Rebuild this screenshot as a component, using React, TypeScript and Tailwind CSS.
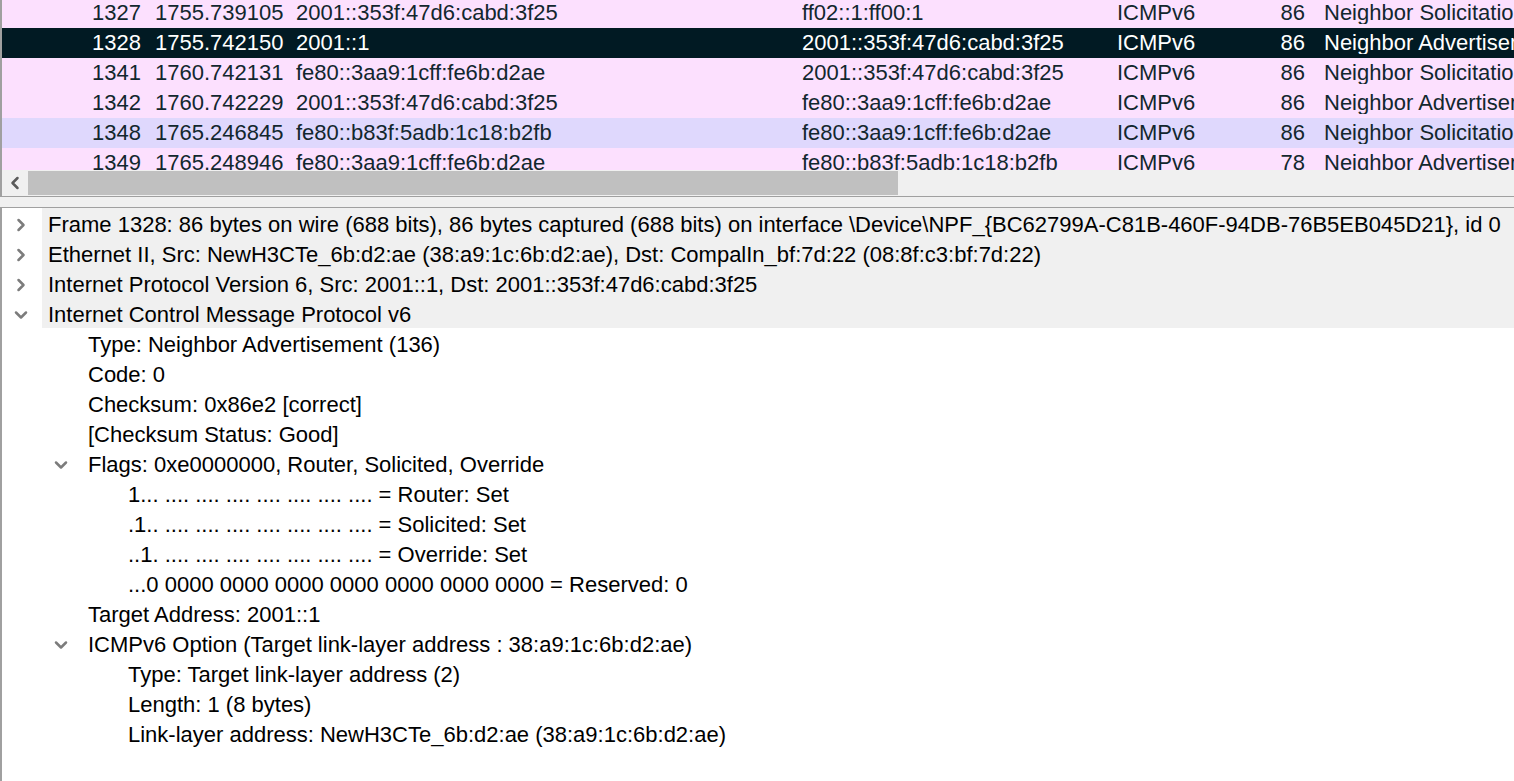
import { ChevronDown, ChevronLeft, ChevronRight } from "lucide-react";

type Packet = {
  no: number;
  time: string;
  src: string;
  dst: string;
  proto: string;
  len: number;
  info: string;
  tone: "pink" | "lilac";
};

const packets: Packet[] = [
  { no: 1327, time: "1755.739105", src: "2001::353f:47d6:cabd:3f25", dst: "ff02::1:ff00:1", proto: "ICMPv6", len: 86, info: "Neighbor Solicitation for 2001::1 from 24:41:8c:bf:7d:22", tone: "pink" },
  { no: 1328, time: "1755.742150", src: "2001::1", dst: "2001::353f:47d6:cabd:3f25", proto: "ICMPv6", len: 86, info: "Neighbor Advertisement 2001::1 (rtr, sol, ovr) is at 38:a9:1c:6b:d2:ae", tone: "pink" },
  { no: 1341, time: "1760.742131", src: "fe80::3aa9:1cff:fe6b:d2ae", dst: "2001::353f:47d6:cabd:3f25", proto: "ICMPv6", len: 86, info: "Neighbor Solicitation for 2001::353f:47d6:cabd:3f25 from 38:a9:1c:6b:d2:ae", tone: "pink" },
  { no: 1342, time: "1760.742229", src: "2001::353f:47d6:cabd:3f25", dst: "fe80::3aa9:1cff:fe6b:d2ae", proto: "ICMPv6", len: 86, info: "Neighbor Advertisement 2001::353f:47d6:cabd:3f25 (sol, ovr) is at 08:8f:c3:bf:7d:22", tone: "pink" },
  { no: 1348, time: "1765.246845", src: "fe80::b83f:5adb:1c18:b2fb", dst: "fe80::3aa9:1cff:fe6b:d2ae", proto: "ICMPv6", len: 86, info: "Neighbor Solicitation for fe80::3aa9:1cff:fe6b:d2ae from 08:8f:c3:bf:7d:22", tone: "lilac" },
  { no: 1349, time: "1765.248946", src: "fe80::3aa9:1cff:fe6b:d2ae", dst: "fe80::b83f:5adb:1c18:b2fb", proto: "ICMPv6", len: 78, info: "Neighbor Advertisement fe80::3aa9:1cff:fe6b:d2ae (rtr, sol)", tone: "pink" },
];

const SELECTED = 1328;

type Node = {
  text: string;
  level: number;
  state?: "open" | "closed";
  top?: boolean;
};

const details: Node[] = [
  { text: "Frame 1328: 86 bytes on wire (688 bits), 86 bytes captured (688 bits) on interface \\Device\\NPF_{BC62799A-C81B-460F-94DB-76B5EB045D21}, id 0", level: 0, state: "closed", top: true },
  { text: "Ethernet II, Src: NewH3CTe_6b:d2:ae (38:a9:1c:6b:d2:ae), Dst: CompalIn_bf:7d:22 (08:8f:c3:bf:7d:22)", level: 0, state: "closed", top: true },
  { text: "Internet Protocol Version 6, Src: 2001::1, Dst: 2001::353f:47d6:cabd:3f25", level: 0, state: "closed", top: true },
  { text: "Internet Control Message Protocol v6", level: 0, state: "open", top: true },
  { text: "Type: Neighbor Advertisement (136)", level: 1 },
  { text: "Code: 0", level: 1 },
  { text: "Checksum: 0x86e2 [correct]", level: 1 },
  { text: "[Checksum Status: Good]", level: 1 },
  { text: "Flags: 0xe0000000, Router, Solicited, Override", level: 1, state: "open" },
  { text: "1... .... .... .... .... .... .... .... = Router: Set", level: 2 },
  { text: ".1.. .... .... .... .... .... .... .... = Solicited: Set", level: 2 },
  { text: "..1. .... .... .... .... .... .... .... = Override: Set", level: 2 },
  { text: "...0 0000 0000 0000 0000 0000 0000 0000 = Reserved: 0", level: 2 },
  { text: "Target Address: 2001::1", level: 1 },
  { text: "ICMPv6 Option (Target link-layer address : 38:a9:1c:6b:d2:ae)", level: 1, state: "open" },
  { text: "Type: Target link-layer address (2)", level: 2 },
  { text: "Length: 1 (8 bytes)", level: 2 },
  { text: "Link-layer address: NewH3CTe_6b:d2:ae (38:a9:1c:6b:d2:ae)", level: 2 },
];

function PacketRow({ p }: { p: Packet }) {
  const sel = p.no === SELECTED;
  const bg = sel
    ? "bg-[#011a23] text-white"
    : p.tone === "lilac"
      ? "bg-[#dfd8fd] text-[#12272e]"
      : "bg-[#fce0fe] text-[#12272e]";
  return (
    <div className={`flex h-[30px] items-center whitespace-nowrap ${bg}`}>
      <div className="w-[139px] shrink-0 text-right">{p.no}</div>
      <div className="w-[155px] shrink-0 pl-[14px]">{p.time}</div>
      <div className="w-[506px] shrink-0 overflow-hidden">{p.src}</div>
      <div className="w-[315px] shrink-0 overflow-hidden">{p.dst}</div>
      <div className="w-[163px] shrink-0">{p.proto}</div>
      <div className="w-[25px] shrink-0 text-right">{p.len}</div>
      <div className="min-w-0 flex-1 overflow-hidden pl-[19px]">{p.info}</div>
    </div>
  );
}

function DetailRow({ n }: { n: Node }) {
  const indent = n.level === 0 ? "pl-0" : n.level === 1 ? "pl-[40px]" : "pl-[80px]";
  return (
    <div className={`flex h-[30px] items-stretch whitespace-nowrap ${indent}`}>
      <div className="flex w-[40px] shrink-0 items-center justify-center pr-[3px] pt-[4px] text-[#7c7c7c]">
        {n.state === "closed" && <ChevronRight size={20} strokeWidth={3} />}
        {n.state === "open" && <ChevronDown size={20} strokeWidth={3} />}
      </div>
      <div className={`flex min-w-0 flex-1 items-center overflow-hidden pl-[6px] pt-[4px] ${n.top ? "bg-[#f0f0f0]" : ""}`}>
        {n.text}
      </div>
    </div>
  );
}

export default function App() {
  return (
    <div
      className="flex h-[781px] w-[1514px] flex-col overflow-hidden bg-white text-[22px] leading-none text-black"
      style={{ fontFamily: '"Liberation Sans", Arial, sans-serif' }}
    >
      <div className="border-l-2 border-[#a0a0a0]">
        <div className="h-[170px] overflow-hidden">
          <div className="-mt-[2px]">
            {packets.map((p) => (
              <PacketRow key={p.no} p={p} />
            ))}
          </div>
        </div>
        <div className="flex h-[26px] bg-[#f0f0f0] py-[1px]">
          <div className="flex w-[26px] items-center justify-center text-[#5a5a5a]">
            <ChevronLeft size={20} strokeWidth={3} />
          </div>
          <div className="w-[870px] bg-[#c0c0c0]" />
        </div>
      </div>
      <div className="h-[12px] shrink-0 border-y border-[#a0a0a0] bg-[#f0f0f0]" />
      <div className="min-h-0 flex-1 border-l-2 border-[#a0a0a0]">
        {details.map((n, i) => (
          <DetailRow key={i} n={n} />
        ))}
      </div>
    </div>
  );
}
